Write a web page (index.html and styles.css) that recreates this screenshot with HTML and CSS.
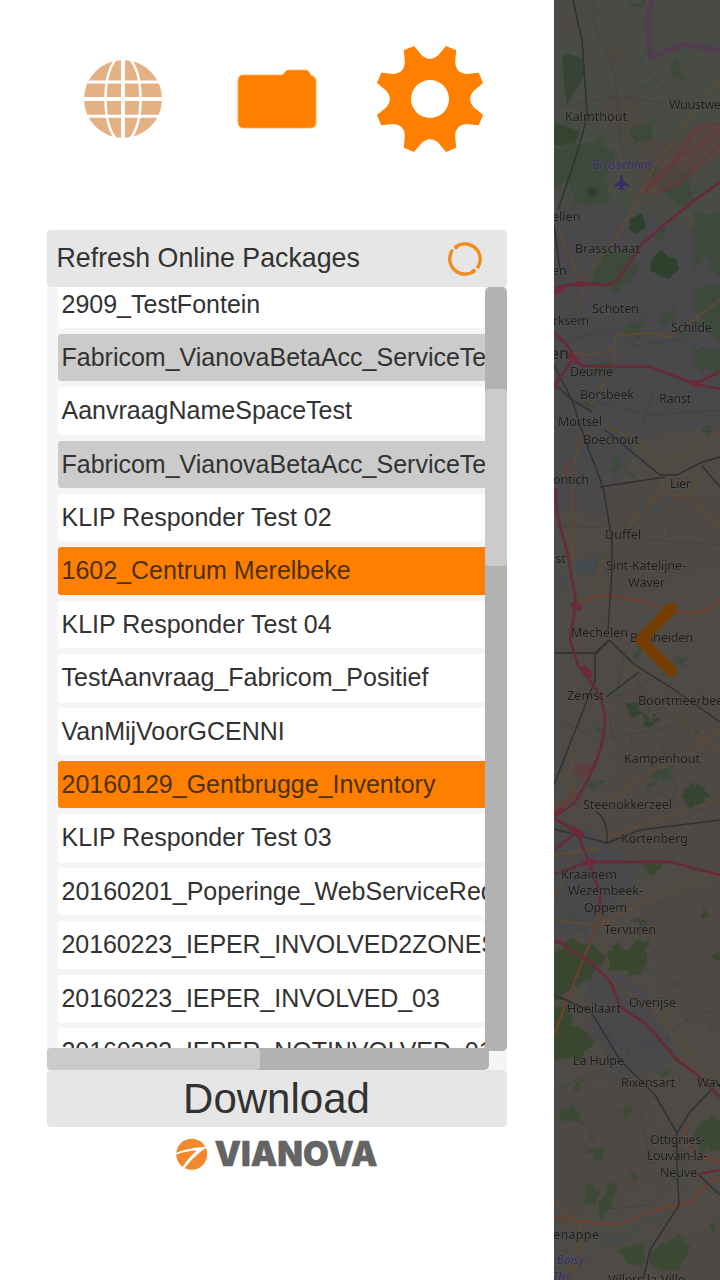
FILE: index.html
```html
<!DOCTYPE html>
<html lang="en">
<head>
<meta charset="utf-8">
<title>Vianova</title>
<link rel="stylesheet" href="styles.css">
</head>
<body>
<div class="app">
<main class="drawer">
  <nav class="tabs">
    <svg class="tab-globe" viewBox="-40 -40 80 80" width="80" height="80">
      <circle r="39" fill="#e3b184"/>
      <g fill="none" stroke="#fff">
        <path d="M-40-17H40M-40 17.2H40" stroke-width="3"/>
        <path d="M-40 0H40M0-40V40" stroke-width="3.8"/>
        <path d="M-7-40C-21-23-21 23-7 40M7-40C21-23 21 23 7 40" stroke-width="2.5"/>
      </g>
    </svg>
    <svg class="tab-folder" viewBox="0 0 80 60" width="80" height="60">
      <path d="M6 6H44C48 6 47 1 52 1H68C73 1 72 5 74.500 6.500Q79 8 79 12V53Q79 59 73 59H7Q1 59 1 53V12Q1 6 6 6Z" fill="#ff8000" stroke="#ffad59" stroke-width=".8"/>
    </svg>
    <svg class="tab-gear" viewBox="-54 -54 108 108" width="108" height="108">
      <path fill="#ff8000" fill-rule="evenodd" d="M-16-53L-8-43.5Q0-36.5 8-43.5L16-53L26.2-48.8L25.1-36.4Q25.8-25.8 36.4-25.1L48.8-26.2L53-16L43.5-8Q36.5 0 43.5 8L53 16L48.8 26.2L36.4 25.1Q25.8 25.8 25.1 36.4L26.2 48.8L16 53L8 43.5Q0 36.5-8 43.5L-16 53L-26.2 48.8L-25.1 36.4Q-25.8 25.8-36.4 25.1L-48.8 26.2L-53 16L-43.5 8Q-36.5 0-43.5-8L-53-16L-48.8-26.2L-36.4-25.1Q-25.8-25.8-25.1-36.4L-26.2-48.8ZM19 0A19 19 0 1 0-19 0A19 19 0 1 0 19 0Z"/>
    </svg>
  </nav>
  <section class="panel">
    <div class="refresh"><span>Refresh Online Packages</span>
      <svg viewBox="-18 -18 36 36" width="36" height="36" fill="none" stroke="#f28a1e" stroke-width="3.4">
        <path d="M-9.300-12A15.300 15.300 0 0 1 12.300 9.200"/><path d="M9.300 12A15.300 15.300 0 0 1-12.300-9.200"/>
        <path d="M-8.800-11.900L-8.300-12.300M8.800 11.900L8.300 12.300" stroke-width="4.200" stroke-linecap="round"/>
      </svg>
    </div>
    <div class="browser">
      <div class="viewport">
        <ul class="list">
          <li>2909_TestFontein</li>
          <li class="grey">Fabricom_VianovaBetaAcc_ServiceTest</li>
          <li>AanvraagNameSpaceTest</li>
          <li class="grey">Fabricom_VianovaBetaAcc_ServiceTest</li>
          <li>KLIP Responder Test 02</li>
          <li class="orange">1602_Centrum Merelbeke</li>
          <li>KLIP Responder Test 04</li>
          <li>TestAanvraag_Fabricom_Positief</li>
          <li>VanMijVoorGCENNI</li>
          <li class="orange">20160129_Gentbrugge_Inventory</li>
          <li>KLIP Responder Test 03</li>
          <li>20160201_Poperinge_WebServiceRequest</li>
          <li class="tight">20160223_IEPER_INVOLVED2ZONES</li>
          <li class="tight">20160223_IEPER_INVOLVED_03</li>
          <li class="tight">20160223_IEPER_NOTINVOLVED_01</li>
        </ul>
      </div>
      <div class="vbar"><div class="vthumb"></div></div>
      <div class="hbar"><div class="hthumb"></div></div>
    </div>
    <div class="download">Download</div>
  </section>
  <svg class="logo" viewBox="175 1137 204 34" width="204" height="34">
    <circle cx="191.700" cy="1154.300" r="15.500" fill="#f2892f"/>
    <path d="M175 1153.500C184 1149.500 194 1147.500 208 1146.500C199 1152 191 1160 184.500 1168.500L182.500 1167C187 1160 192 1154.500 197 1150.500C188 1151 182 1152.500 175 1155Z" fill="#fff"/>
    <text x="214.500" y="1166" textLength="163" lengthAdjust="spacingAndGlyphs" class="brand">VIANOVA</text>
  </svg>
</main>
<aside class="map">
<svg viewBox="554 0 166 1280" width="166" height="1280">
  <defs>
    <filter id="rough" x="554" y="0" width="166" height="1280" filterUnits="userSpaceOnUse">
      <feTurbulence type="fractalNoise" baseFrequency=".09" numOctaves="3" seed="4" result="n"/>
      <feDisplacementMap in="SourceGraphic" in2="n" scale="14" xChannelSelector="R" yChannelSelector="G"/>
      <feGaussianBlur stdDeviation=".7"/>
    </filter>
  </defs>
  <rect x="554" width="166" height="1280" fill="#4e4b47"/>
  <g filter="url(#rough)">
    <path fill="#494c44" d="M540 -10H730V215L655 235L554 200H540Z"/>
    <path fill="#4a4a4b" d="M540 215L600 200L730 240V420L640 440L600 520L540 500ZM540 820L590 830L640 870L600 930L540 940ZM585 960L640 985L680 1060L620 1080L590 1030Z"/>
    <path fill="#504a44" d="M600 480L730 500V560L610 600ZM620 690L730 700V880L610 850ZM640 900L730 880V1040L660 1000ZM540 1090L650 1080L660 1180L540 1230ZM680 1240L730 1220V1290H670Z"/>
    <path fill="#4d4843" d="M600 100L635 92L650 130L620 145ZM640 135L675 140L720 122V150L670 185L640 180ZM560 15L580 20L570 40ZM600 40L630 55L610 70Z"/>
    <path fill="#3c483a" d="M540 120L580 132L575 142L540 145ZM540 150L600 140L617 155L600 175L610 200L575 207L570 180L540 195ZM670 60L680 62L679 73L690 80L676 79L668 72ZM630 130L655 120L650 135L632 145ZM635 85L655 84L640 89ZM628 5L645 0L638 12ZM650 165L690 170L690 210L660 190ZM695 215H730V290L706 260L690 270ZM600 255L630 250L640 270L618 290L595 285ZM690 290L730 280V350L700 325ZM650 235L665 225L662 240ZM628 325L645 318L640 338L625 332ZM660 315L675 305L674 325L662 322ZM690 350H730V370L700 375ZM595 365L615 362L613 375L600 375ZM582 402L592 400L590 412Z"/>
    <path fill="#3d493d" d="M611 460L620 458L622 470L613 473ZM625 470L638 475L630 480ZM592 725L603 728L597 735ZM626 730L633 740L630 750ZM655 770L675 768L670 776L661 782L652 778ZM690 730L700 730L693 742ZM585 780L608 782L590 792ZM630 650L640 648L637 660ZM675 660L690 655L685 668ZM585 418L592 430L586 432ZM700 430L715 425L710 435ZM675 330L685 322L683 336ZM645 785L655 780L650 792ZM665 525L672 530L668 534Z"/>
    <path fill="#354532" d="M625 703L637 705L642 715L660 720L653 726L643 720L629 713ZM685 787L699 784L710 795L700 804L683 804Z"/>
    <path fill="#39462f" d="M643 865L663 863L657 874L650 872ZM611 946L625 947L650 938L645 965L638 977L610 968L606 960ZM540 960L571 940L590 945L607 955L590 980L555 1000H540ZM540 1010L565 1000L575 1025L595 1040L580 1058L540 1062ZM630 918L650 920L640 928ZM700 905L708 915L703 920ZM712 955L730 950V970Z"/>
    <path fill="#3b4936" d="M561 1108L575 1104L583 1121L570 1124L560 1118ZM585 1150L609 1152L601 1160L590 1156ZM583 1185L596 1183L597 1205L588 1203ZM604 1183L618 1188L613 1205L603 1220L597 1217ZM620 1110L634 1105L630 1117L623 1120ZM618 1250L645 1243L645 1262L630 1265ZM653 1248L678 1235L690 1247L680 1270L650 1268ZM695 1130L713 1115L730 1130V1150L700 1150ZM654 1074L667 1067L672 1077ZM570 1085L582 1080L580 1095ZM594 1145L590 1136L597 1138ZM710 1225L718 1222L716 1232ZM630 1170L638 1178L632 1180Z"/>
    <path fill="#454c4d" d="M540 570L567 575L562 600L540 600ZM640 505L672 498L665 507L643 516ZM575 565L605 550L600 565L580 575ZM540 1235L620 1237L660 1210V1215L620 1242L540 1240Z"/>
    <path fill="#5c3c40" d="M575 765L592 762L590 774L578 776Z"/>
  </g>
  <g class="soft">
    <path fill="#334230" d="M562 56L569 54L582 58L584 75L581 82L573 94L567 104L565 92ZM554 122L568 128L580 132L575 142L554 146Z" opacity=".8"/>
    <path fill="#2e412d" d="M630 219L642 213L646 227L637 234L629 230ZM651 262L656 254L661 250L669 257L677 260L679 269L669 279L660 276L650 270ZM587 190L592 187L599 190L595 197L588 196Z"/>
    <path fill="#60433f" d="M640 193L690 130Q695 122 720 123V155L675 188L650 194Z" opacity=".5"/>
  </g>
  <g fill="none" class="soft">
    <path class="border" d="M653 0C646 10 647 30 651 57L685 44L720 51"/>
    <path class="airfield" d="M642 193L675 160L692 135Q698 124 720 124M645 192L680 157L720 130M655 194L680 183L720 143"/>
    <path class="minor" d="M594 0V24L615 73L619 120L623 160M595 10L635 45L643 68L680 102M554 108L618 96L665 103M554 342L610 330L635 345L680 340L720 352M554 525L600 528M582 580L640 520M615 700L625 650L650 710M670 670L610 700M610 715Q610 760 655 780M660 740L676 790L665 820M665 900L640 930L645 970L690 990M560 1200L580 1160L600 1110L625 1060M640 1110L650 1160L690 1190M635 930Q670 915 710 890M575 1045L620 1020M655 995L700 970M554 890L600 955M600 1210L650 1205L690 1160M554 1090L600 1070L640 1090M590 400L650 415L720 410M640 430L655 390M600 510L650 540L720 545M560 720L600 740L680 725M620 810L650 790L715 815"/>
    <path class="yellow" d="M720 78L695 112L655 165L635 205L615 240L590 270L582 285V300L575 310M559 230L582 285M554 350L590 355L614 350L616 335L650 333L670 337L720 300M614 350V367M610 375L590 405M582 430L573 470V560M605 425L645 445L662 468M665 462L693 450L720 432M662 470L663 490L680 498L695 490L698 467M690 495L720 527M662 493L635 520L600 560V590M720 730L690 755L655 770L610 800M680 715L695 735L720 750M570 740L572 760L568 780L577 792M630 665L640 672L632 675M554 900L575 850M554 920L595 925L720 870M610 920L600 930M610 980L660 1015L680 1040L695 1060M665 1050L720 1085M554 1200L580 1225L578 1255L570 1280M554 855L600 848M600 840L655 820L720 800"/>
    <path class="trunk" d="M577 792L554 812M554 1035L575 980L595 930L602 912M580 605Q595 592 616 596L645 602Q700 625 720 600M562 480L568 462M554 1218C600 1221 612 1232 642 1214L680 1204C700 1203 694 1190 720 1176M687 1125Q682 1155 720 1163"/>
    <path class="rail" d="M573 0L582 40L587 112Q586 130 558 210M554 225L560 270M554 365L572 400L592 412M572 400L585 440L603 487L612 540V570L608 630M609 640L595 655V680L554 785M600 487L665 477M554 383L572 400M605 430L660 475L677 475L700 463L720 457M702 466L720 487M554 653H595L609 640L635 665L675 690L720 722M639 672L606 697M554 829L607 843L640 830L720 820M554 995L590 1010L620 1060M620 1060L655 1095L677 1133M711 1090L690 1112L677 1133V1165L679 1205L650 1250L643 1280M699 1175L720 1195M596 812Q608 818 607 843"/>
    <path class="motor" d="M720 182L695 200L660 228L641 245L620 277Q615 285 605 285L580 283L554 288M554 332L567 345L574 357L582 366L650 367L695 384L720 372M695 384L720 389M554 390L558 380L572 361M556 488Q554 510 567 550L576 602L570 640L578 665L594 686C618 720 598 765 575 802Q563 813 554 815M554 818L577 832L554 850M577 832L590 865M554 874L589 862L670 862L720 875M590 862L600 895L600 910M554 942L560 942L590 962L609 980Q615 990 620 1007L645 1023L662 1042L677 1060L695 1073L711 1088L720 1097M695 1175L720 1170"/>
    <path class="junction" d="M554 292L563 288M574 605L579 608M584 668L590 675M573 829L581 834M587 863L592 861M570 357L576 361M692 383L698 384M556 813L560 811M577 284H583"/>
    <path class="purple" d="M578 980L600 958M554 998L580 980M605 1025L616 1045L630 1055M640 1045L665 1040L685 1020L710 1010V1035" stroke-dasharray="3 6"/>
  </g>
  <g class="labels">
    <text x="565" y="121" textLength="62">Kalmthout</text><text x="669" y="109" textLength="67">Wuustwezel</text>
    <text x="592" y="169" textLength="60" class="violet">Brasschaat</text>
    <path d="M621.500 175Q623 175 623 178V181L629 185V187L623 185.500V188L625.500 190L621.500 189.500L617.500 190L620 188V185.500L614 187V185L620 181V178Q620 175 621.500 175Z" fill="#352c65"/>
    <text x="552" y="221">ellen</text><text x="575" y="252.500" textLength="65">Brasschaat</text><text x="552" y="274.500">en</text>
    <text x="592" y="313" textLength="47">Schoten</text><text x="553" y="324.500" textLength="36">rksem</text><text x="671" y="332" textLength="41">Schilde</text>
    <text x="550" y="359" class="city">en</text><text x="570" y="375.500" textLength="43">Deurne</text><text x="580" y="398.500" textLength="54">Borsbeek</text><text x="659" y="402.500" textLength="32">Ranst</text>
    <text x="558" y="425.500" textLength="44">Mortsel</text><text x="583" y="444" textLength="56">Boechout</text><text x="553" y="483.500" textLength="36">ontich</text><text x="670" y="488" textLength="21">Lier</text>
    <text x="605" y="539" textLength="36">Duffel</text><text x="606" y="569.500" textLength="80">Sint-Katelijne-</text><text x="628" y="586.500" textLength="37">Waver</text><text x="552" y="563">ist</text>
    <text x="571" y="637" textLength="57">Mechelen</text><text x="630" y="641.500" textLength="63">Bonheiden</text><text x="567" y="700" textLength="37">Zemst</text><text x="638" y="705" textLength="92">Boortmeerbeek</text>
    <text x="624" y="763" textLength="76">Kampenhout</text><text x="583" y="808.500" textLength="89">Steenokkerzeel</text><text x="621" y="842.500" textLength="67">Kortenberg</text>
    <text x="561" y="879" textLength="56">Kraainem</text><text x="568" y="895" textLength="75">Wezembeek-</text><text x="584" y="912" textLength="43">Oppem</text><text x="604" y="933.500" textLength="52">Tervuren</text>
    <text x="567" y="1013" textLength="54">Hoeilaart</text><text x="629" y="1007" textLength="47">Overijse</text><text x="573" y="1065" textLength="51">La Hulpe</text><text x="621" y="1087" textLength="54">Rixensart</text><text x="697" y="1086.500">Wavre</text>
    <text x="650" y="1143.500" textLength="55">Ottignies-</text><text x="647" y="1160" textLength="60">Louvain-la-</text><text x="660" y="1177" textLength="37">Neuve</text><text x="553" y="1239" textLength="46">enappe</text>
    <text x="556.500" y="1264" class="violet" textLength="32">Baisy-</text><text x="552" y="1281" class="violet">Thy</text><text x="608" y="1284" textLength="77">Villers-la-Ville</text>
  </g>
  <path d="M671.500 608.500L641 640L671.500 671" fill="none" stroke="#733e00" stroke-width="11.500" stroke-linecap="round" stroke-linejoin="round"/>
</svg>
</aside>
</div>
</body>
</html>
```
FILE: styles.css
```css
* { box-sizing: border-box; }
body { margin: 0; background: #fff; font-family: "Liberation Sans", Arial, sans-serif; color: #323232; }
.app { display: grid; grid-template-columns: 554px 166px; width: 720px; height: 1280px; overflow: hidden; }
.drawer { display: flex; flex-direction: column; background: #fff; }
.tabs { display: flex; align-items: center; height: 197px; padding-left: 83.300px; }
.tab-folder { margin-left: 73.500px; }
.tab-gear { margin-left: 59.200px; }
.panel { width: 460px; margin: 33px 0 0 47px; }
.refresh { display: flex; justify-content: space-between; align-items: center; height: 57px; padding: 0 24px 1px 9.500px; background: #e6e6e6; border-radius: 4px; font-size: 26.750px; }
.refresh svg { margin-top: 1px; }
.browser { display: grid; grid-template-columns: 438px 22px; grid-template-rows: 761px 22px; height: 783px; background: #f5f5f5; }
.viewport { overflow: hidden; padding-left: 11px; }
.list { display: flex; flex-direction: column; gap: 6px; margin: -6.500px 0 0; padding: 0; list-style: none; }
.list li { flex: none; width: 540px; height: 47.400px; padding-left: 3.500px; border-radius: 3px; background: #fff; font-size: 25px; line-height: 47.600px; white-space: nowrap; }
.list .tight { letter-spacing: -.08px; }
.list .grey { background: #cbcbcb; }
.list .orange { background: #ff8000; color: #4d300f; }
.vbar { position: relative; width: 22px; height: 764px; padding-top: 102px; background: #b2b2b2; border-radius: 5px; }
.vthumb { height: 177px; border-radius: 4px; background: #cbcbcb; }
.hbar { width: 442px; height: 22px; background: #b2b2b2; border-radius: 5px 0 5px 5px; }
.hthumb { width: 213px; height: 22px; border-radius: 4px; background: #cbcbcb; }
.download { height: 57px; background: #e6e6e6; border-radius: 4px; font-size: 42px; line-height: 57px; text-align: center; text-indent: -1px; }
.logo { margin: 10px 0 0 175px; }
.brand { font: 900 33.500px Inter, sans-serif; fill: #646464; stroke: #646464; stroke-width: .4px; }
.map { background: #4e4b47; }
.map svg { display: block; }
.soft { filter: blur(.6px); }
.border { stroke: #503d4e; stroke-width: 6; }
.airfield { stroke: #633a39; stroke-width: 2; }
.minor { stroke: #404346; stroke-width: .9; }
.yellow { stroke: #5f4b33; stroke-width: 1.800; }
.trunk { stroke: #6b4031; stroke-width: 2.400; }
.rail { stroke: #2f3133; stroke-width: 1.500; }
.motor { stroke: #652c37; stroke-width: 2.800; }
.junction { stroke: #6c2a3a; stroke-width: 6; stroke-linecap: round; }
.purple { stroke: #453a4f; stroke-width: 1.500; }
.labels { font-family: "Noto Sans", sans-serif; font-size: 12.600px; fill: #1c1c1c; stroke: #5c5955; stroke-width: .8px; paint-order: stroke; }
.labels path { stroke: none; }
.labels .violet { font-style: italic; fill: #352d60; }
.labels .city { font-size: 16px; }
```
